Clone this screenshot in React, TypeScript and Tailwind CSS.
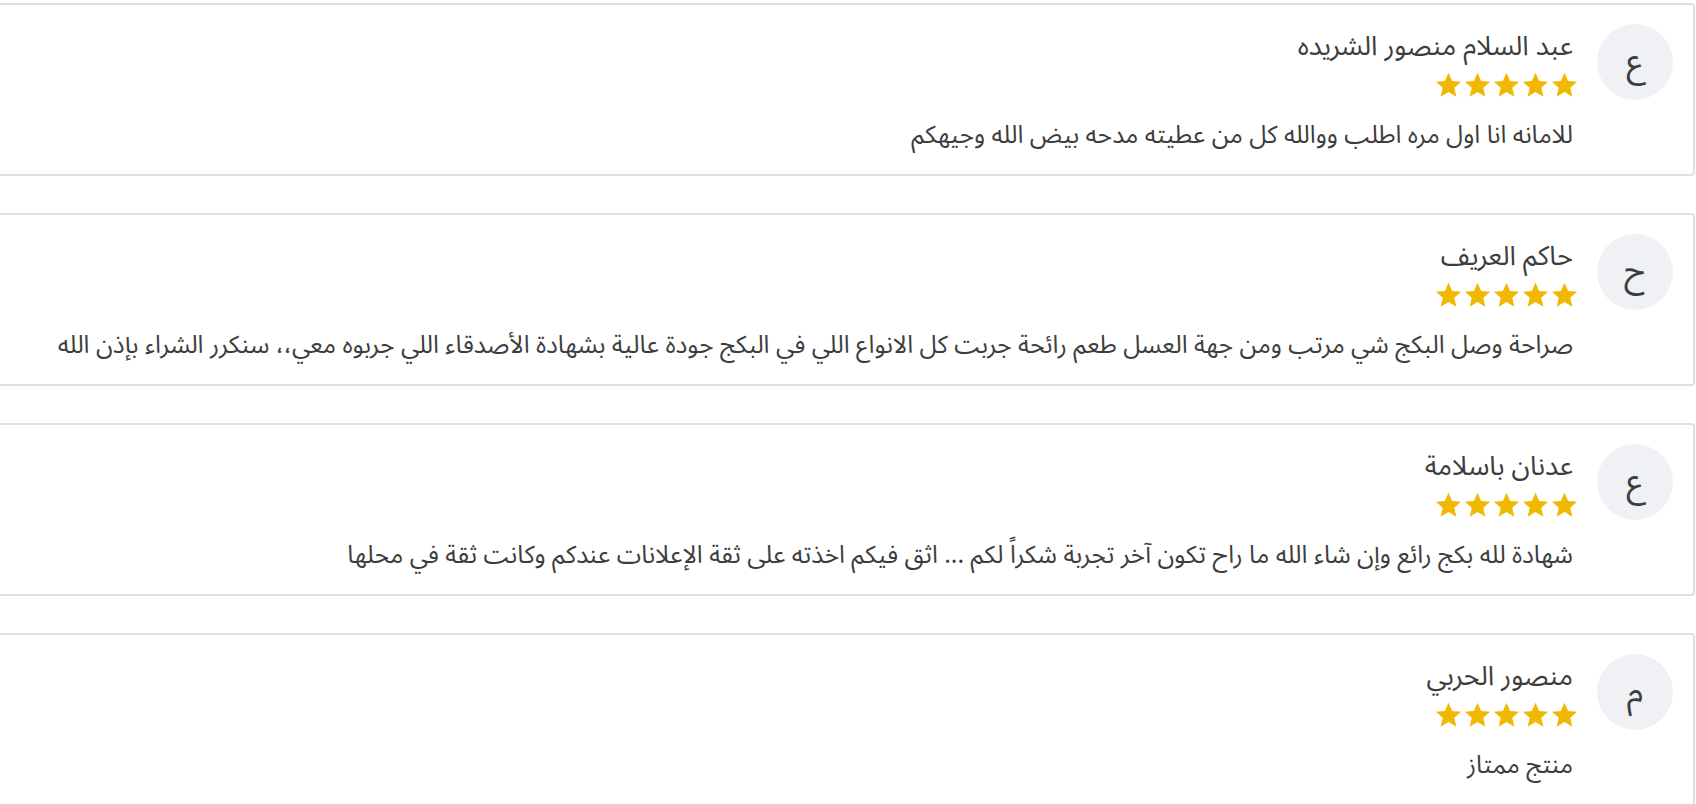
const reviews = [
  {
    initial: 'ع',
    name: 'عبد السلام منصور الشريده',
    text: 'للامانه انا اول مره اطلب ووالله كل من عطيته مدحه بيض الله وجيهكم',
  },
  {
    initial: 'ح',
    name: 'حاكم العريف',
    text: 'صراحة وصل البكج شي مرتب ومن جهة العسل طعم رائحة جربت كل الانواع اللي في البكج جودة عالية بشهادة الأصدقاء اللي جربوه معي،، سنكرر الشراء بإذن الله',
  },
  {
    initial: 'ع',
    name: 'عدنان باسلامة',
    text: 'شهادة لله بكج رائع وإن شاء الله ما راح تكون آخر تجربة شكراً لكم ... اثق فيكم اخذته على ثقة الإعلانات عندكم وكانت ثقة في محلها',
  },
  {
    initial: 'م',
    name: 'منصور الحربي',
    text: 'منتج ممتاز',
  },
];

function Stars() {
  return (
    <div className="flex gap-[2px] text-[#f0b800]">
      {[0, 1, 2, 3, 4].map((i) => (
        <svg key={i} width="27" height="26" viewBox="0 0 24 23">
          <path
            fill="currentColor"
            d="M12 0.6l3.2 7.4 8 0.7-6.1 5.3 1.9 7.9L12 17.7l-7 4.2 1.9-7.9L0.8 8.7l8-0.7z"
          />
        </svg>
      ))}
    </div>
  );
}

export default function App() {
  return (
    <div
      dir="rtl"
      className="w-[1696px] h-[804px] overflow-hidden bg-white pt-[3px]"
      style={{ fontFamily: '"Noto Sans Arabic", "Noto Sans", "DejaVu Sans", sans-serif' }}
    >
      <div className="flex flex-col gap-[37px] mr-[1px] ml-[-20px]">
        {reviews.map((r, i) => (
          <div
            key={i}
            className="flex items-start gap-[24px] h-[173px] rounded-[4px] border-2 border-[#dfdfdf] pr-[20px] pt-[19px]"
          >
            <div className="flex h-[76px] w-[76px] shrink-0 items-center justify-center rounded-full bg-[#f0f1f5] text-[34px] text-[#3d3d3d]">
              {r.initial}
            </div>
            <div className="flex flex-col items-start pt-[5px] text-[#3d3d3d]">
              <div className="text-[27px] leading-[36px]">{r.name}</div>
              <div className="mt-[7px] -mr-[5px]">
                <Stars />
              </div>
              <div className="mt-[21px] text-[24.75px] leading-[32px] whitespace-nowrap">
                {r.text}
              </div>
            </div>
          </div>
        ))}
      </div>
    </div>
  );
}
